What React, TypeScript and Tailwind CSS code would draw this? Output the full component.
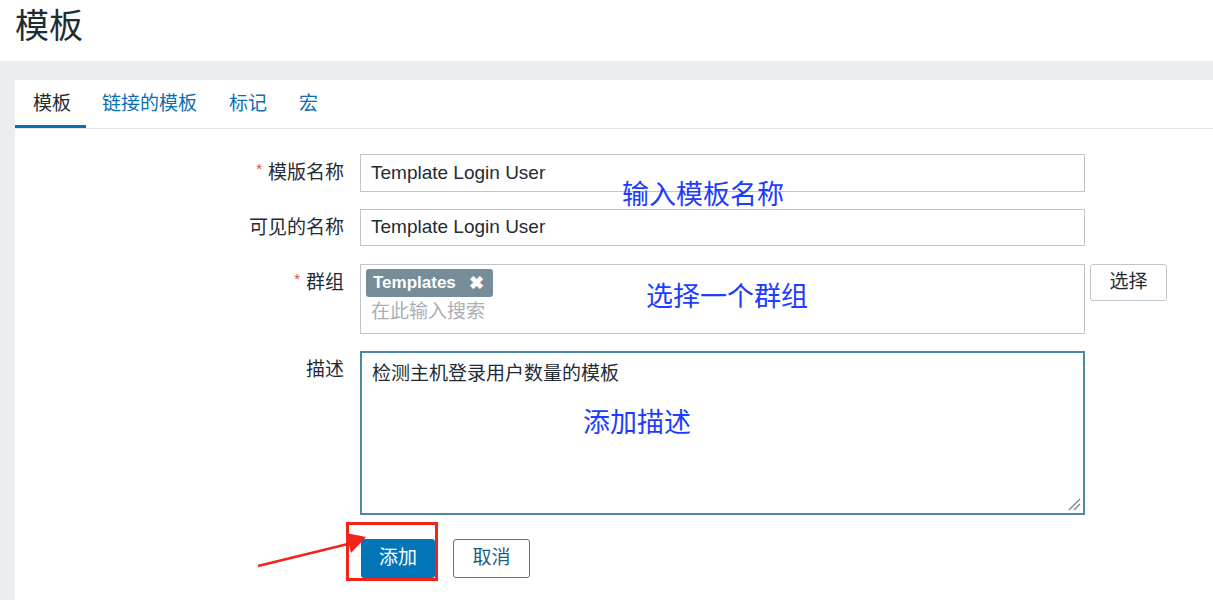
import React from "react";

const tabs = ["模板", "链接的模板", "标记", "宏"];

const Label = ({ text, required }: { text: string; required?: boolean }) => (
  <div className="w-[329px] shrink-0 h-[38px] leading-[38px] text-right text-[19px] text-[#1f2c33]">
    {required && <span className="text-[#e0483e] text-[15px] align-top relative top-[-4px] mr-[6px]">*</span>}
    {text}
  </div>
);

const App = () => {
  return (
    <div className="relative w-[1213px] h-[600px] overflow-hidden bg-white font-['Liberation_Sans','Noto_Sans_CJK_SC',sans-serif]">
      {/* page header */}
      <div className="h-[61px] pl-[15px] pt-[3px]">
        <h1 className="text-[34px] leading-[46px] text-[#1f2c33]">模板</h1>
      </div>

      <div className="h-[539px] bg-[#ebeef0] pt-[19px] pl-[15px]">
        <div className="h-full bg-white">
          {/* tabs */}
          <div className="flex h-[49px] border-b border-[#e3e6e8]">
            {tabs.map((t, i) => (
              <div
                key={t}
                className={`h-[48px] leading-[48px] text-[19px] ${
                  i === 0
                    ? "pl-[18px] pr-[15px] text-[#1f2c33] border-b-[3px] border-[#0a6eb4]"
                    : "px-4 text-[#0a6eb4]"
                }`}
              >
                {t}
              </div>
            ))}
          </div>

          {/* form */}
          <div className="flex flex-col pt-[25px]">
            <div className="flex">
              <Label text="模版名称" required />
              <div className="ml-4 w-[725px] h-[38px] border-[1.5px] border-[#bfc6cb] px-[10px] flex items-center text-[19px] text-[#1f2c33]">
                Template Login User
              </div>
            </div>

            <div className="flex mt-[17px]">
              <Label text="可见的名称" />
              <div className="ml-4 w-[725px] h-[37px] border-[1.5px] border-[#bfc6cb] px-[10px] flex items-center text-[19px] text-[#1f2c33]">
                Template Login User
              </div>
            </div>

            <div className="flex mt-[17px]">
              <Label text="群组" required />
              <div className="ml-4 w-[725px] h-[70px] border-[1.5px] border-[#bfc6cb] pl-[5px] pt-[4px]">
                <div className="inline-flex items-center h-[28px] bg-[#768d99] rounded-[3px] pl-[7px] pr-[9px] text-white text-[17px] font-bold">
                  Templates
                  <span className="ml-[13px] text-[18px]">✖</span>
                </div>
                <div className="pl-[5px] text-[19px] leading-[30px] text-[#a9afb4]">在此输入搜索</div>
              </div>
              <div className="ml-[5px] w-[77px] h-[37px] border-[1.5px] border-[#bfc6cb] rounded-[3px] flex items-center justify-center text-[19px] text-[#1f2c33]">
                选择
              </div>
            </div>

            <div className="flex mt-[17px]">
              <Label text="描述" />
              <div className="relative ml-4 w-[725px] h-[164px] border-2 border-[#4d87a6] px-[10px] pt-[6px] text-[19px] leading-[30px] text-[#1f2c33]">
                检测主机登录用户数量的模板
                <svg className="absolute right-[2px] bottom-[2px]" width="14" height="14" viewBox="0 0 14 14">
                  <path d="M2 13 L13 2 M7 13 L13 7" stroke="#7d7d7d" strokeWidth="1.3" />
                </svg>
              </div>
            </div>

            <div className="flex mt-[24px] pl-[346px] gap-[18px]">
              <div className="w-[74px] h-[39px] bg-[#0275b8] rounded-[3px] flex items-center justify-center text-[19px] text-white">
                添加
              </div>
              <div className="w-[77px] h-[39px] bg-white border-[1.5px] border-[#3d7ea5] rounded-[3px] flex items-center justify-center text-[19px] text-[#1d5e86]">
                取消
              </div>
            </div>
          </div>
        </div>
      </div>

      {/* annotations */}
      <div className="absolute left-[622px] top-[176px] text-[27px] leading-[34px] text-[#1c3dff] font-['Noto_Sans_CJK_SC',sans-serif]">
        输入模板名称
      </div>
      <div className="absolute left-[646px] top-[278px] text-[27px] leading-[34px] text-[#1c3dff] font-['Noto_Sans_CJK_SC',sans-serif]">
        选择一个群组
      </div>
      <div className="absolute left-[583px] top-[404px] text-[27px] leading-[34px] text-[#1c3dff] font-['Noto_Sans_CJK_SC',sans-serif]">
        添加描述
      </div>

      <div className="absolute left-[346px] top-[522px] w-[92px] h-[59px] border-[3px] border-[#f2231b]" />
      <svg className="absolute left-0 top-0 pointer-events-none" width="1213" height="600">
        <line x1="258" y1="566" x2="352" y2="543" stroke="#f2231b" strokeWidth="2.5" />
        <polygon points="366,537 346,533 351,553" fill="#f2231b" />
      </svg>
    </div>
  );
};

export default App;
